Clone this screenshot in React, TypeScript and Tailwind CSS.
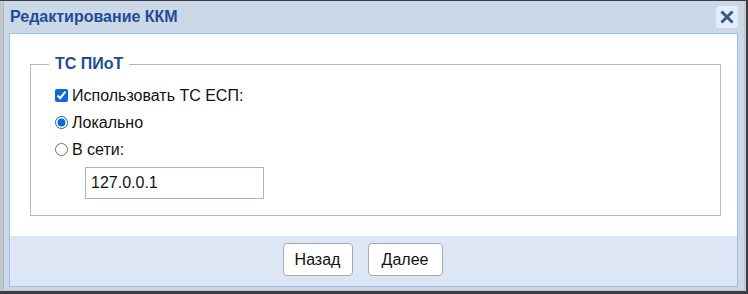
export default function App() {
  return (
    <div className="w-[748px] h-[294px] bg-[#c4c8cc] border-t border-r-2 border-b-[3px] border-[#3b3f44] font-['Liberation_Sans',Arial,sans-serif]">
      <div className="ml-[3px] w-[741px] h-[289px] bg-[#cbd8e8] border-l border-[#aebbcc] flex flex-col">
        {/* title */}
        <div className="h-[32px] flex items-center justify-between pl-[6px] pr-[6px]">
          <span className="text-[16px] font-bold text-[#1f4c96]">Редактирование ККМ</span>
          <button className="w-[22px] h-[22px] rounded-[3px] bg-[#e4edf9] flex items-center justify-center">
            <svg width="14" height="14" viewBox="0 0 14 14">
              <path d="M2.5 2.5L11.5 11.5M11.5 2.5L2.5 11.5" stroke="#3a5a8c" strokeWidth="3" strokeLinecap="square" />
            </svg>
          </button>
        </div>

        {/* content */}
        <div className="ml-[5px] mr-[6px] h-[254px] border border-[#9fbde6] flex flex-col">
          <div className="bg-white h-[202px] pt-[18px] pl-[20px] pr-[16px]">
            <fieldset className="border border-[#b3b6c8] h-[164px] pl-[24px] pr-4">
              <legend className="px-[6px] -ml-[6px] text-[16px] font-bold text-[#1f4c96]">ТС ПИоТ</legend>
              <div className="flex flex-col text-[16px] text-[#111]">
                <label className="flex items-center h-[27px] mt-[6px]">
                  <input type="checkbox" defaultChecked className="w-[13px] h-[13px] mr-[4px] accent-[#0a6bd6]" />
                  Использовать ТС ЕСП:
                </label>
                <label className="flex items-center h-[27px]">
                  <input type="radio" name="m" defaultChecked className="w-[13px] h-[13px] mr-[4px] accent-[#0a6bd6]" />
                  Локально
                </label>
                <label className="flex items-center h-[27px]">
                  <input type="radio" name="m" className="w-[13px] h-[13px] mr-[4px]" />
                  В сети:
                </label>
                <input
                  defaultValue="127.0.0.1"
                  className="mt-[4px] ml-[30px] w-[179px] h-[32px] border border-[#b0b2c4] px-[5px] text-[16px] outline-none"
                />
              </div>
            </fieldset>
          </div>
          <div className="flex-1 bg-[#dde6f4] flex justify-center items-start pt-[7px] gap-[15px] pr-[22px]">
            <button className="h-[33px] w-[70px] bg-white border border-[#a9a9a9] rounded-[4px] text-[16px] text-[#111]">Назад</button>
            <button className="h-[33px] w-[75px] bg-white border border-[#a9a9a9] rounded-[4px] text-[16px] text-[#111]">Далее</button>
          </div>
        </div>
      </div>
    </div>
  );
}
